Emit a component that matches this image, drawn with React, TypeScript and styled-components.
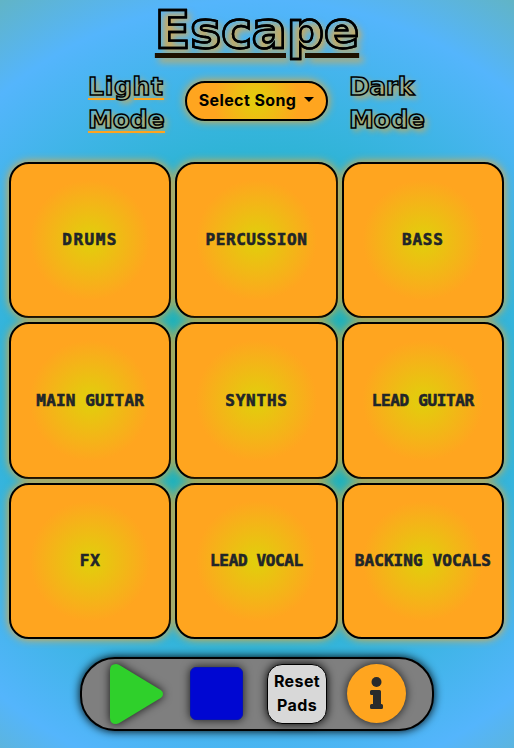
import React from "react";
import styled, { createGlobalStyle } from "styled-components";

const GlobalStyle = createGlobalStyle`
  *, *::before, *::after { box-sizing: border-box; }
  html, body { margin: 0; height: 748px; overflow: hidden; }
  button { padding: 0; margin: 0; cursor: pointer; }
`;

const Page = styled.main`
  width: 514px;
  height: 748px;
  overflow: hidden;
  display: flex;
  flex-direction: column;
  align-items: center;
  font-family: "DejaVu Sans", sans-serif;
  background: radial-gradient(circle at 257px 395px, #16b1a8 0, #2db4d4 235px, #54b5fc 395px, #62b4c3 475px, #6cb4a0 520px);
`;

const Title = styled.h1`
  margin: 0;
  height: 62px;
  width: 206px;
  display: flex;
  justify-content: center;
  white-space: nowrap;
  font-size: 52px;
  line-height: 60px;
  letter-spacing: -0.1px;
  font-weight: 700;
  color: transparent;
  -webkit-text-stroke: 2.4px #000;
  text-shadow: 4px 4px 7px rgba(255, 165, 31, 0.75);

  span {
    text-decoration: underline #1c1000 4.5px;
    text-underline-offset: 5px;
  }
`;

const Controls = styled.header`
  width: 514px;
  height: 100px;
  display: grid;
  grid-template-columns: 88px 97px 143px 21px 1fr;
  padding-top: 8px;
`;

const Mode = styled.div<{ $column: number }>`
  grid-column: ${(p) => p.$column};
  display: flex;
  flex-direction: column;
  align-items: flex-start;
  font-size: 25px;
  line-height: 33px;
  font-weight: 700;
  color: transparent;
  -webkit-text-stroke: 1.5px #000;
  text-shadow: 3px 3px 6px rgba(255, 165, 31, 0.8);
`;

const underlines = {
  none: "none",
  solid: "linear-gradient(#ffa51f, #ffa51f)",
  skip: "linear-gradient(90deg, #ffa51f 27px, transparent 27px 46px, #ffa51f 46px)",
};

const Word = styled.span<{ $tracking?: number; $underline?: keyof typeof underlines }>`
  letter-spacing: ${(p) => p.$tracking ?? 0}px;
  background: ${(p) => underlines[p.$underline ?? "none"]} 0 28px / 100% 2px no-repeat;
`;

const SongSelect = styled.button`
  grid-column: 3;
  width: 143px;
  height: 40px;
  margin-top: 11px;
  border: 2px solid #000;
  border-radius: 20px;
  display: flex;
  align-items: center;
  justify-content: center;
  gap: 8px;
  padding-bottom: 2px;
  color: #000;
  font: 700 16px "Inter", sans-serif;
  letter-spacing: 0.4px;
  white-space: nowrap;
  background: radial-gradient(circle, #e0d00b 0, #ffa51f 60%);
  box-shadow: 0 0 10px #ffa51f;
`;

const Caret = styled.i`
  border: 5px solid transparent;
  border-top-color: #000;
  border-bottom: 0;
  margin-top: -2px;
`;

const PadGrid = styled.section`
  width: 495px;
  height: 477px;
  margin-right: 1px;
  display: grid;
  grid-template-columns: repeat(3, 1fr);
  grid-template-rows: repeat(3, 1fr);
  gap: 4px;
`;

const Pad = styled.button<{ $tracking: number }>`
  position: relative;
  border: 2px solid #000;
  border-radius: 20px;
  padding-bottom: 0.5px;
  color: #212529;
  font: 700 16px "DejaVu Sans Mono", monospace;
  letter-spacing: ${(p) => p.$tracking}px;
  -webkit-text-stroke: 0.6px #212529;
  white-space: nowrap;
  background: radial-gradient(circle, #e0d00b 0, #ffa51f 55%);
  box-shadow: 0 0 10px #ffa51f;
`;

const Transport = styled.footer`
  width: 354px;
  height: 74px;
  margin-top: 18px;
  border: 2px solid #000;
  border-radius: 35px;
  background: #7f7f7f;
  box-shadow: 0 0 10px #000;
  display: grid;
  grid-template-columns: 80px 77px 80px 59px;
  padding-left: 28px;
  align-items: center;
`;

const PlayIcon = styled.svg`
  width: 53px;
  height: 62px;
  overflow: visible;
  filter: drop-shadow(0 0 5px rgba(0, 0, 0, 0.85));
`;

const Stop = styled.button`
  width: 53px;
  height: 53px;
  margin-bottom: 1px;
  border: 1px solid #0612b4;
  border-radius: 6px;
  background: #0007d2;
  box-shadow: 0 0 10px rgba(0, 0, 0, 0.8);
`;

const Reset = styled.button`
  width: 60px;
  height: 60px;
  border: 1px solid #000;
  border-radius: 15px;
  padding-bottom: 2px;
  background: #d8d8d8;
  color: #000;
  font: 700 16px/24px "Inter", sans-serif;
  letter-spacing: 0.4px;
  box-shadow: 0 0 10px #000;
`;

const Info = styled.button`
  width: 59px;
  height: 59px;
  margin-bottom: 1px;
  border: 0;
  border-radius: 50%;
  background: #ffa51f;
  box-shadow: 0 0 10px rgba(0, 0, 0, 0.8);

  svg { display: block; }
`;

const pads = [
  { label: "DRUMS", tracking: 1.5 },
  { label: "PERCUSSION", tracking: 0.55 },
  { label: "BASS", tracking: 0.8 },
  { label: "MAIN GUITAR", tracking: 0.15 },
  { label: "SYNTHS", tracking: 0.75 },
  { label: "LEAD GUITAR", tracking: -0.35 },
  { label: "FX", tracking: 0.7 },
  { label: "LEAD VOCAL", tracking: -0.35 },
  { label: "BACKING VOCALS", tracking: 0.1 },
];

export default function App() {
  return (
    <>
      <GlobalStyle />
      <Page>
        <Title><span>Escape</span></Title>
        <Controls>
          <Mode $column={2}>
            <Word $tracking={0.7} $underline="skip">Light</Word>
            <Word $tracking={-0.1} $underline="solid">Mode</Word>
          </Mode>
          <SongSelect>Select Song <Caret /></SongSelect>
          <Mode $column={5}>
            <Word $tracking={-0.4}>Dark</Word>
            <Word $tracking={-0.3}>Mode</Word>
          </Mode>
        </Controls>
        <PadGrid>
          {pads.map((pad) => (
            <Pad key={pad.label} $tracking={pad.tracking}>{pad.label}</Pad>
          ))}
        </PadGrid>
        <Transport>
          <PlayIcon viewBox="0 0 53 62" role="button" aria-label="Play">
            <path d="M0 7Q0 1 6 1Q8 1 11 3L49 26Q53 28 53 31Q53 34 49 36L11 59Q8 61 6 61Q0 61 0 55Z" fill="#2fd02b" />
          </PlayIcon>
          <Stop aria-label="Stop" />
          <Reset>Reset<br />Pads</Reset>
          <Info aria-label="Information">
            <svg width="59" height="59" viewBox="0 0 59 59" fill="#292b2c">
              <circle cx="29.5" cy="18" r="5" />
              <path d="M24.5 26H32.5Q34 26 34 27.5V40H34.5Q36 40 36 41.5V43.5Q36 45 34.5 45H24.5Q23 45 23 43.5V41.5Q23 40 24.5 40H26V31H24.5Q23 31 23 29.5V27.5Q23 26 24.5 26Z" />
            </svg>
          </Info>
        </Transport>
      </Page>
    </>
  );
}
